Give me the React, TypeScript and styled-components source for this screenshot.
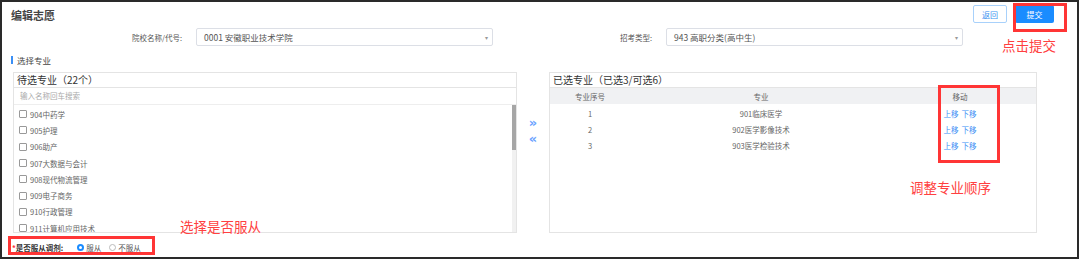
import React from 'react'
import styled, { createGlobalStyle } from 'styled-components'

const GlobalStyle = createGlobalStyle`
  html, body {
    margin: 0;
    padding: 0;
    background: #ffffff;
  }
  body {
    font-family: "Noto Sans CJK SC", "Liberation Sans", sans-serif;
    color: #333;
  }
`

const waiting = [
  '904中药学',
  '905护理',
  '906助产',
  '907大数据与会计',
  '908现代物流管理',
  '909电子商务',
  '910行政管理',
  '911计算机应用技术',
]

const chosen = [
  { no: 1, name: '901临床医学' },
  { no: 2, name: '902医学影像技术' },
  { no: 3, name: '903医学检验技术' },
]

const App = () => {
  return (
    <>
      <GlobalStyle />
      <Frame>
        <TopBar>
          <Title>编辑志愿</Title>
          <Buttons>
            <GhostButton>返回</GhostButton>
            <PrimaryButton>提交</PrimaryButton>
          </Buttons>
        </TopBar>

        <FormRow>
          <Label>院校名称/代号:</Label>
          <Select>
            <span>0001 安徽职业技术学院</span>
            <Caret>▾</Caret>
          </Select>
          <Label>招考类型:</Label>
          <Select>
            <span>943 高职分类(高中生)</span>
            <Caret>▾</Caret>
          </Select>
        </FormRow>

        <Section>
          <Bar />
          选择专业
        </Section>

        <Panels>
          <Panel width={504}>
            <PanelHead>待选专业（22个）</PanelHead>
            <Search>输入名称回车搜索</Search>
            <ListWrap>
              <List>
                {waiting.map((m) => (
                  <Item key={m}>
                    <Box />
                    {m}
                  </Item>
                ))}
              </List>
              <Track>
                <Thumb />
              </Track>
            </ListWrap>
          </Panel>

          <Arrows>
            <Arrow>»</Arrow>
            <Arrow>«</Arrow>
          </Arrows>

          <Panel width={488}>
            <PanelHead>已选专业（已选3/可选6）</PanelHead>
            <TableHead>
              <Cell>专业序号</Cell>
              <Cell>专业</Cell>
              <Cell move>移动</Cell>
            </TableHead>
            <Rows>
              {chosen.map((c) => (
                <TableRow key={c.no}>
                  <Cell>{c.no}</Cell>
                  <Cell>{c.name}</Cell>
                  <Cell move>
                    <Link>上移</Link>
                    <Link>下移</Link>
                  </Cell>
                </TableRow>
              ))}
            </Rows>
          </Panel>
        </Panels>

        <Bottom>
          <Question>
            <Star>*</Star>是否服从调剂:
          </Question>
          <Radio>
            <Dot checked />
            服从
          </Radio>
          <Radio>
            <Dot />
            不服从
          </Radio>
        </Bottom>

        {/* annotations drawn over the screenshot */}
        <Mark style={{ left: 1011, top: 1, width: 54, height: 29 }} />
        <Note style={{ left: 1000, top: 35 }}>点击提交</Note>
        <Mark style={{ left: 936, top: 83, width: 62, height: 78 }} />
        <Note style={{ left: 908, top: 177 }}>调整专业顺序</Note>
        <Mark style={{ left: 6, top: 234, width: 147, height: 19 }} />
        <Note style={{ left: 178, top: 216 }}>选择是否服从</Note>
      </Frame>
    </>
  )
}

export default App

const Frame = styled.div`
  position: relative;
  width: 1079px;
  height: 259px;
  box-sizing: border-box;
  border: 2px solid #2a2a2a;
  overflow: hidden;
  display: flex;
  flex-direction: column;
`
const TopBar = styled.div`
  display: flex;
  justify-content: space-between;
  align-items: center;
  height: 18px;
  margin-top: 3px;
  padding: 0 23px 0 9px;
`
const Title = styled.div`
  font-size: 11px;
  font-weight: bold;
  color: #444;
  margin-top: 2px;
`
const Buttons = styled.div`
  display: flex;
  gap: 8px;
`
const GhostButton = styled.div`
  width: 34px;
  height: 18px;
  box-sizing: border-box;
  border: 1px solid #a8d1fb;
  border-radius: 2px;
  color: #3d93f0;
  font-size: 8px;
  display: flex;
  align-items: center;
  justify-content: center;
`
const PrimaryButton = styled.div`
  width: 39px;
  height: 18px;
  border-radius: 2px;
  background: #1a8cff;
  color: #fff;
  font-size: 8px;
  display: flex;
  align-items: center;
  justify-content: center;
`
const FormRow = styled.div`
  display: grid;
  grid-template-columns: 180px 297px 145px 297px;
  column-gap: 14px;
  align-items: center;
  height: 18px;
  margin-top: 5px;
`
const Label = styled.div`
  text-align: right;
  font-size: 7.5px;
  color: #555;
`
const Select = styled.div`
  height: 18px;
  box-sizing: border-box;
  border: 1px solid #dcdfe6;
  border-radius: 2px;
  display: flex;
  align-items: center;
  justify-content: space-between;
  padding: 0 4px 0 7px;
  font-size: 8.5px;
  color: #555;
`
const Caret = styled.span`
  font-size: 6px;
  color: #999;
`
const Section = styled.div`
  display: flex;
  align-items: center;
  gap: 4px;
  height: 10px;
  margin-top: 9px;
  padding-left: 9px;
  font-size: 8.5px;
  color: #444;
`
const Bar = styled.div`
  width: 2px;
  height: 8px;
  background: #3b8ff5;
`
const Panels = styled.div`
  display: flex;
  height: 161px;
  margin-top: 7px;
  padding-left: 11px;
`
const Panel = styled.div<{ width: number }>`
  width: ${({ width }) => width}px;
  box-sizing: border-box;
  border: 1px solid #e4e4e4;
  display: flex;
  flex-direction: column;
  overflow: hidden;
`
const PanelHead = styled.div`
  height: 14px;
  flex: none;
  border-bottom: 1px solid #e4e4e4;
  padding-left: 3px;
  font-size: 10px;
  line-height: 14px;
  color: #333;
`
const Search = styled.div`
  height: 16px;
  flex: none;
  border-bottom: 1px solid #eeeeee;
  padding-left: 6px;
  font-size: 7.5px;
  line-height: 16px;
  color: #aaa;
`
const ListWrap = styled.div`
  flex: 1;
  display: flex;
  min-height: 0;
`
const List = styled.div`
  flex: 1;
  padding-top: 1px;
  overflow: hidden;
`
const Item = styled.div`
  height: 16.3px;
  display: flex;
  align-items: center;
  gap: 3px;
  padding-left: 5px;
  font-size: 7.5px;
  color: #666;
`
const Box = styled.span`
  width: 6px;
  height: 6px;
  border: 1px solid #999;
  border-radius: 1px;
`
const Track = styled.div`
  width: 4px;
  background: #f1f1f1;
`
const Thumb = styled.div`
  height: 45px;
  background: #a6a6a6;
`
const Arrows = styled.div`
  width: 32px;
  display: flex;
  flex-direction: column;
  align-items: center;
  padding-top: 44px;
  gap: 2px;
`
const Arrow = styled.div`
  font-size: 13px;
  line-height: 14px;
  font-weight: bold;
  color: #6aa2ff;
  font-family: "DejaVu Sans", sans-serif;
`
const TableHead = styled.div`
  display: grid;
  grid-template-columns: 80px 262px 1fr;
  height: 16px;
  flex: none;
  align-items: center;
  background: #f0f1f3;
  font-size: 7.5px;
  color: #666;
`
const Rows = styled.div`
  padding-top: 1px;
`
const TableRow = styled.div`
  display: grid;
  grid-template-columns: 80px 262px 1fr;
  height: 16.3px;
  align-items: center;
  font-size: 7.5px;
  color: #666;
`
const Cell = styled.div<{ move?: boolean }>`
  text-align: center;
  padding-right: ${({ move }) => (move ? 8 : 0)}px;
  display: flex;
  justify-content: center;
  gap: 3px;
`
const Link = styled.span`
  color: #3d8ff5;
`
const Bottom = styled.div`
  display: flex;
  align-items: center;
  height: 18px;
  margin-top: 5px;
  padding-left: 10px;
  font-size: 7.5px;
  color: #333;
`
const Question = styled.div`
  font-weight: bold;
  margin-right: 14px;
`
const Star = styled.span`
  color: #f33;
`
const Radio = styled.div`
  display: flex;
  align-items: center;
  gap: 2px;
  margin-right: 8px;
  color: #555;
`
const Dot = styled.span<{ checked?: boolean }>`
  width: 7px;
  height: 7px;
  border-radius: 50%;
  box-sizing: border-box;
  border: ${({ checked }) => (checked ? '2.5px solid #1a8cff' : '1px solid #bbb')};
  background: #fff;
`
const Mark = styled.div`
  position: absolute;
  box-sizing: border-box;
  border: 3px solid #ff3535;
`
const Note = styled.div`
  position: absolute;
  font-size: 13.5px;
  line-height: 16px;
  color: #ff4040;
  white-space: nowrap;
`
